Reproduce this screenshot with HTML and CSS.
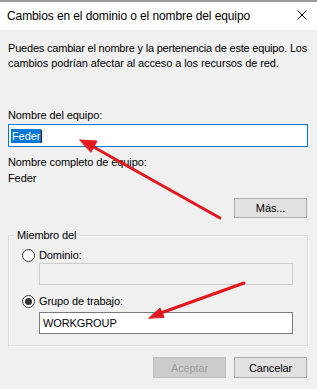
FILE: index.html
```html
<!DOCTYPE html>
<html lang="es">
<head>
  <meta charset="UTF-8">
  <title>Cambios en el dominio o el nombre del equipo</title>
  <link rel="stylesheet" href="styles.css">
</head>
<body>
  <div class="window">
    <div class="titlebar">
      <span class="title">Cambios en el dominio o el nombre del equipo</span>
      <svg class="close" width="10" height="10" viewBox="0 0 10 10">
        <path d="M0.5 0.5 L9.5 9.5 M9.5 0.5 L0.5 9.5" stroke="#000" stroke-width="1" fill="none"/>
      </svg>
    </div>

    <div class="content">
      <p class="intro"><span class="tight">Puedes cambiar el nombre y la pertenencia de este equipo. Los</span><br>cambios podrían afectar al acceso a los recursos de red.</p>

      <div class="label name-label">Nombre del equipo:</div>
      <div class="textbox focused"><span class="sel">Feder</span><span class="caret"></span></div>

      <div class="label full-label">Nombre completo de equipo:</div>
      <div class="label full-value">Feder</div>

      <div class="more-row">
        <button class="btn">Más...</button>
      </div>

      <fieldset class="group">
        <legend>Miembro del</legend>
        <div class="radio-row first">
          <span class="radio"></span>
          <span>Dominio:</span>
        </div>
        <div class="textbox disabled"></div>
        <div class="radio-row second">
          <span class="radio checked"></span>
          <span>Grupo de trabajo:</span>
        </div>
        <div class="textbox normal">WORKGROUP</div>
      </fieldset>

      <div class="actions">
        <button class="btn off">Aceptar</button>
        <button class="btn">Cancelar</button>
      </div>
    </div>

    <!-- annotation arrows drawn on top of the dialog -->
    <svg class="marks" width="317" height="389" viewBox="0 0 317 389">
      <g stroke="#e3171e" stroke-width="3" stroke-linecap="round" fill="#e3171e">
        <line x1="220" y1="218" x2="90" y2="145"/>
        <polygon points="80,140 97,141 91,152" stroke-width="1"/>
        <line x1="244" y1="283" x2="158" y2="314"/>
        <polygon points="149,318 160,308 164,317" stroke-width="1"/>
      </g>
    </svg>
  </div>
</body>
</html>
```

FILE: styles.css
```css
body {
  margin: 0;
  background: #f0f0f0;
  font-family: "Liberation Sans", Arial, sans-serif;
  font-size: 11px;
  letter-spacing: -0.1px;
  color: #000;
}

.window {
  position: relative;
  width: 317px;
  height: 389px;
  background: #f0f0f0;
  overflow: hidden;
}

.titlebar {
  height: 28px;
  background: #fff;
  border-top: 2px solid #9a9a9a;
  display: flex;
  align-items: center;
  justify-content: space-between;
  padding: 0 10px 0 7px;
}

.title {
  font-size: 12px;
  padding-bottom: 1px;
}

.close {
  display: block;
  margin-bottom: 2px;
}

.content {
  padding: 0 9px 0 8px;
}

.intro {
  margin: 11px -9px 0 0;
  line-height: 15px;
  white-space: nowrap;
}

.intro .tight {
  letter-spacing: -0.2px;
}

.label {
  line-height: 15px;
}

.name-label {
  margin-top: 37px;
}

.textbox {
  box-sizing: border-box;
  height: 23px;
  line-height: 21px;
  padding: 0 3px;
  background: #fff;
  border: 1px solid #7a7a7a;
  white-space: nowrap;
}

.textbox.focused {
  margin-top: 1px;
  border-color: #0078d7;
  padding-left: 2px;
}

.sel {
  display: inline-block;
  line-height: 14px;
  padding: 0 1px;
  background: #0078d7;
  color: #fff;
  vertical-align: middle;
}

.caret {
  display: inline-block;
  width: 1px;
  height: 13px;
  background: #1a1a1a;
  vertical-align: middle;
}

.full-label {
  margin-top: 8px;
}

.full-value {
  margin-top: 1px;
}

.more-row {
  display: flex;
  justify-content: flex-end;
  margin-top: 12px;
  padding-right: 1px;
}

.btn {
  box-sizing: border-box;
  width: 73px;
  height: 21px;
  padding: 0;
  background: #e1e1e1;
  border: 1px solid #adadad;
  font-family: inherit;
  font-size: 11px;
  letter-spacing: -0.1px;
  color: #000;
}

.more-row .btn {
  height: 20px;
}

.btn.off {
  background: #cccccc;
  border-color: #bfbfbf;
  color: #a0a0a0;
}

.group {
  margin: 10px 0 0;
  padding: 0 14px 11px 6px;
  border: 1px solid #dcdcdc;
  box-shadow: inset 1px 1px 0 #fff, 1px 1px 0 #fff;
}

.group legend {
  padding: 0 2px;
  line-height: 15px;
  background: #f0f0f0;
}

.radio-row {
  display: flex;
  align-items: center;
  gap: 4px;
  line-height: 15px;
  margin-left: 7px;
}

.radio-row.first {
  margin-top: 5px;
}

.radio-row.second {
  margin-top: 9px;
}

.radio {
  box-sizing: border-box;
  width: 13px;
  height: 13px;
  border: 1px solid #333;
  border-radius: 50%;
  background: #fff;
  display: flex;
  align-items: center;
  justify-content: center;
}

.radio.checked::after {
  content: "";
  width: 7px;
  height: 7px;
  border-radius: 50%;
  background: #333;
}

.group .textbox {
  width: 254px;
  height: 22px;
  line-height: 20px;
  margin-left: 24px;
}

.textbox.disabled {
  background: #f0f0f0;
  border-color: #cccccc;
}

.textbox.normal {
  margin-top: 3px;
}

.actions {
  display: flex;
  justify-content: flex-end;
  gap: 8px;
  margin-top: 11px;
  padding-right: 1px;
}

.marks {
  position: absolute;
  left: 0;
  top: 0;
  pointer-events: none;
}
```
